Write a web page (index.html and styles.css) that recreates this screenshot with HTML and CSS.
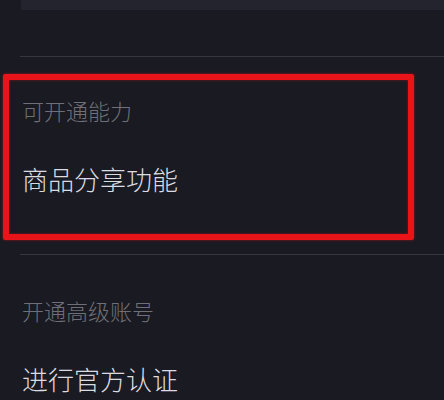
FILE: index.html
```html
<!DOCTYPE html>
<html>
<head>
    <meta name="viewport" content="width=device-width, initial-scale=1.0">
    <title>账号设置</title>
    <link rel="stylesheet" href="styles.css">
</head>
<body>
    <div class="top-card"></div>
    <div class="divider first"></div>

    <div class="section ability">
        <div class="label">可开通能力</div>
        <div class="value">商品分享功能</div>
        <div class="highlight"></div>
    </div>

    <div class="divider"></div>

    <div class="section upgrade">
        <div class="label">开通高级账号</div>
        <div class="value">进行官方认证</div>
    </div>
</body>
</html>
```

FILE: styles.css
```css
body {
    margin: 0;
    background-color: #191a22;
    font-family: "Noto Sans CJK SC", "Noto Sans", sans-serif;
    font-weight: 300;
    height: 400px;
    overflow: hidden;
}
.top-card {
    height: 10px;
    margin-left: 21px;
    background-color: #23242d;
}
.divider {
    height: 1px;
    margin-left: 20px;
    background-color: #35363f;
}
.divider.first {
    margin-top: 46px;
}
.section {
    position: relative;
    padding-left: 22px;
}
.section.ability {
    padding-top: 42px;
    padding-bottom: 62px;
}
.section.upgrade {
    padding-top: 44px;
}
.label {
    font-size: 22px;
    line-height: 22px;
    color: #6f7077;
}
.value {
    font-size: 26px;
    line-height: 26px;
    color: #dcdce0;
}
.ability .value {
    margin-top: 45px;
}
.upgrade .value {
    margin-top: 45px;
}
.highlight {
    position: absolute;
    left: 3px;
    top: 17px;
    width: 411px;
    height: 166px;
    box-sizing: border-box;
    border: 6px solid #e8141a;
    border-radius: 2px;
    box-shadow: 0 0 3px rgba(232, 20, 26, 0.6), inset 0 0 3px rgba(232, 20, 26, 0.5);
}
```
